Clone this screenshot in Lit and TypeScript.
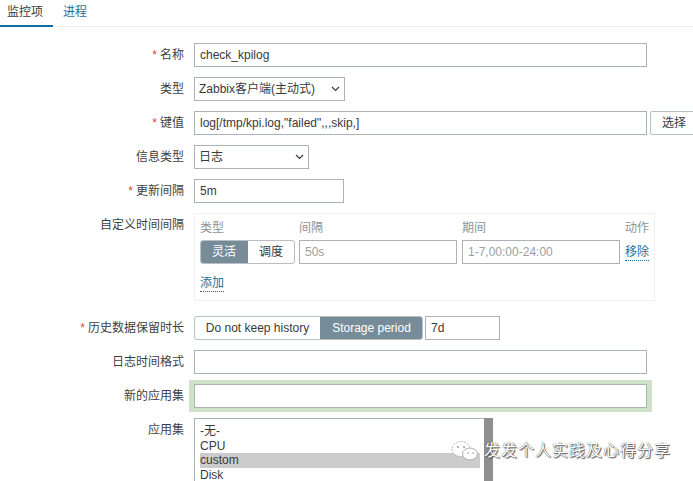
import { LitElement, html, css } from "lit";
import { customElement } from "lit/decorators.js";

@customElement("app-root")
export class AppRoot extends LitElement {
  static styles = css`
    :host {
      display: block;
      position: relative;
      width: 693px;
      height: 481px;
      overflow: hidden;
      background: #fff;
      color: #3a3a3a;
      font-family: "Liberation Sans", "Noto Sans CJK SC", sans-serif;
      font-size: 12px;
    }
    .tabs {
      display: flex;
      height: 26px;
      border-bottom: 1px solid #ebeef0;
      box-sizing: content-box;
    }
    .tab {
      width: 53px;
      box-sizing: border-box;
      padding: 4px 0 0 7px;
      line-height: 16px;
      color: #1f6f99;
    }
    .tab.active {
      color: #3a3a3a;
      border-bottom: 2px solid #0c70a6;
      height: 27px;
    }
    .tab + .tab { padding-left: 10px; }
    .form {
      display: grid;
      grid-template-columns: 184px 1fr;
      column-gap: 10px;
      row-gap: 10px;
      padding-top: 16px;
      align-items: start;
    }
    .label {
      text-align: right;
      line-height: 24px;
      color: #3f3f3f;
    }
    .req { color: #d9473a; margin-right: 3px; }
    .field {
      display: flex;
      gap: 3px;
      min-width: 0;
    }
    .box {
      box-sizing: border-box;
      height: 24px;
      border: 1px solid #acb3b6;
      background: #fff;
      padding: 0 5px;
      line-height: 22px;
      color: #3a3a3a;
      white-space: nowrap;
      overflow: hidden;
      flex: none;
    }
    .w453 { width: 453px; }
    .w150 { width: 150px; }
    .w75 { width: 75px; margin-left: -1px; }
    .select {
      display: flex;
      align-items: center;
      justify-content: space-between;
      padding: 0 4px 0 4px;
    }
    .w151 { width: 151px; }
    .w115 { width: 115px; }
    .btn {
      box-sizing: border-box;
      width: 50px;
      height: 24px;
      border: 1px solid #b9bfc2;
      border-radius: 2px;
      padding-left: 11px;
      line-height: 22px;
      flex: none;
    }
    .intervals {
      box-sizing: border-box;
      width: 461px;
      height: 88px;
      border: 1px solid #eef0f1;
      padding: 4px 5px 0;
      margin-bottom: 5px;
    }
    .igrid {
      display: grid;
      grid-template-columns: 95px 158px 158px auto;
      column-gap: 4px;
      align-items: center;
    }
    .igrid .head { color: #8c9498; line-height: 20px; height: 22px; }
    .igrid .third { margin-left: 1px; margin-right: -1px; width: 158px; box-sizing: border-box; }
    .igrid .fourth { margin-left: 2px; }
    .fourth .link { margin-top: 1px; }
    .toggle {
      display: flex;
      box-sizing: border-box;
      height: 24px;
      border: 1px solid #b9bfc2;
      border-radius: 3px;
      overflow: hidden;
      line-height: 22px;
      text-align: center;
    }
    .toggle span { flex: none; }
    .on {
      background: #768d99;
      color: #fff;
    }
    .on.fill { margin: -1px 0; line-height: 24px; }
    .on.first { width: 48px; margin-left: -1px; }
    .second { width: 46px; }
    .ph { color: #9a9fa2; }
    .link {
      color: #1f6f99;
      border-bottom: 1px dotted #1f6f99;
      line-height: 15px;
      display: inline-block;
    }
    .add { margin-top: 12px; }
    .history { width: 229px; }
    .history .a { width: 125px; }
    .history .b { width: 103px; }
    .glow {
      margin: -4px 0 -4px -5px;
      border-style: solid;
      border-color: #cfe3cb;
      border-width: 4px 5px;
      flex: none;
      height: 24px;
    }
    .list {
      box-sizing: border-box;
      width: 299px;
      height: 120px;
      border: 1px solid #acb3b6;
      display: flex;
      line-height: 14.67px;
      font-size: 12px;
    }
    .opts { flex: 1; padding: 5px 4px 0 5px; min-width: 0; }
    .opt.sel { background: #cccccc; }
    .bar { width: 9px; background: #8f8f8f; flex: none; margin-right: -1px; margin-top: -1px; }
    .mark {
      position: absolute;
      left: 450px;
      top: 440px;
      display: flex;
      align-items: center;
      gap: 6px;
      color: #fff;
      font-size: 16px;
      letter-spacing: 1px;
      line-height: 22px;
      text-shadow: 0 0 1px #333, 1px 1px 1px #555;
      white-space: nowrap;
    }
  `;

  private chevron() {
    return html`<svg width="9" height="6" viewBox="0 0 9 6"><path d="M1 1l3.5 3.5L8 1" fill="none" stroke="#3a3a3a" stroke-width="1.2"/></svg>`;
  }

  render() {
    return html`
      <div class="tabs">
        <div class="tab active">监控项</div>
        <div class="tab">进程</div>
      </div>
      <div class="form">
        <div class="label"><span class="req">*</span>名称</div>
        <div class="field"><div class="box w453">check_kpilog</div></div>

        <div class="label">类型</div>
        <div class="field"><div class="box select w151">Zabbix客户端(主动式)${this.chevron()}</div></div>

        <div class="label"><span class="req">*</span>键值</div>
        <div class="field"><div class="box w453">log[/tmp/kpi.log,"failed",,,skip,]</div><div class="btn">选择</div></div>

        <div class="label">信息类型</div>
        <div class="field"><div class="box select w115">日志${this.chevron()}</div></div>

        <div class="label"><span class="req">*</span>更新间隔</div>
        <div class="field"><div class="box w150">5m</div></div>

        <div class="label">自定义时间间隔</div>
        <div class="field">
          <div class="intervals">
            <div class="igrid">
              <div class="head">类型</div>
              <div class="head">间隔</div>
              <div class="head third">期间</div>
              <div class="head fourth">动作</div>
              <div class="toggle"><span class="on fill first">灵活</span><span class="second">调度</span></div>
              <div class="box ph">50s</div>
              <div class="box ph third">1-7,00:00-24:00</div>
              <div class="fourth"><span class="link">移除</span></div>
            </div>
            <span class="link add">添加</span>
          </div>
        </div>

        <div class="label"><span class="req">*</span>历史数据保留时长</div>
        <div class="field">
          <div class="toggle history"><span class="a">Do not keep history</span><span class="on fill b">Storage period</span></div>
          <div class="box w75">7d</div>
        </div>

        <div class="label">日志时间格式</div>
        <div class="field"><div class="box w453"></div></div>

        <div class="label">新的应用集</div>
        <div class="field"><div class="glow"><div class="box w453"></div></div></div>

        <div class="label">应用集</div>
        <div class="field">
          <div class="list">
            <div class="opts">
              <div class="opt">-无-</div>
              <div class="opt">CPU</div>
              <div class="opt sel">custom</div>
              <div class="opt">Disk</div>
            </div>
            <div class="bar"></div>
          </div>
        </div>
      </div>
      <div class="mark">
        <svg width="28" height="22" viewBox="0 0 28 22">
          <ellipse cx="11" cy="9" rx="9" ry="7.5" fill="#fff" stroke="#aaa" stroke-width="0.8" stroke-dasharray="2 1"/>
          <ellipse cx="20" cy="14" rx="7.5" ry="6" fill="#fff" stroke="#999" stroke-width="0.8"/>
          <circle cx="8" cy="7" r="1" fill="#999"/><circle cx="14" cy="7" r="1" fill="#999"/>
          <circle cx="18" cy="13" r="0.8" fill="#999"/><circle cx="23" cy="13" r="0.8" fill="#999"/>
        </svg>
        <span>发发个人实践及心得分享</span>
      </div>
    `;
  }
}
